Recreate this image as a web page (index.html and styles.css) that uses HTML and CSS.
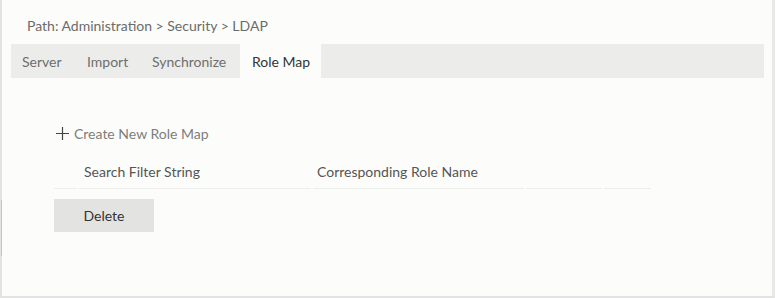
FILE: index.html
```html
<!DOCTYPE html>
<html>
<head>
<meta charset="utf-8">
<link rel="stylesheet" href="styles.css">
</head>
<body>
<div class="frame">
  <span class="edge-mark"></span>
  <div class="path">Path: Administration &gt; Security &gt; LDAP</div>
  <div class="tabs">
    <div class="tab t-server">Server</div>
    <div class="tab t-import">Import</div>
    <div class="tab t-sync">Synchronize</div>
    <div class="tab t-role active">Role Map</div>
  </div>
  <div class="content">
    <div class="create">
      <svg class="plus" width="13" height="13" viewBox="0 0 13 13"><path d="M6.5 0V13M0 6.5H13" stroke="#444" stroke-width="1.2" fill="none"/></svg>
      <span>Create New Role Map</span>
    </div>
    <div class="thead">
      <div class="cell c0"></div>
      <div class="cell c1">Search Filter String</div>
      <div class="cell c2">Corresponding Role Name</div>
      <div class="cell c3"></div>
      <div class="cell c4"></div>
    </div>
    <button class="btn">Delete</button>
  </div>
</div>
</body>
</html>
```
FILE: styles.css
```css
html, body {
  margin: 0;
  padding: 0;
  background: #fcfdfb;
}
body {
  font-family: Lato, "Open Sans", sans-serif;
  font-size: 14px;
}
.frame {
  position: relative;
  box-sizing: border-box;
  width: 775px;
  height: 298px;
  border-left: 2px solid #e3e3e2;
  border-right: 3px solid #e8e8e7;
  border-bottom: 2px solid #e3e3e3;
}
.edge-mark {
  position: absolute;
  left: -1px;
  top: 200px;
  width: 1px;
  height: 56px;
  background: #c4c4c4;
}
.path {
  color: #6b6b6b;
  padding: 16px 0 0 25px;
  height: 44px;
  box-sizing: border-box;
  line-height: 20px;
}
.tabs {
  display: flex;
  margin-left: 9px;
  width: 753px;
  height: 34px;
  background: #ecedea;
}
.tab {
  box-sizing: border-box;
  padding-left: 11px;
  line-height: 35px;
  color: #6e6e6e;
  white-space: nowrap;
}
.t-server { width: 65px; }
.t-import { width: 65px; }
.t-sync { width: 99px; }
.t-role { width: 81px; padding-left: 12px; }
.tab.active {
  background: #fcfdfb;
  color: #333;
}
.content {
  padding: 43px 0 0 52px;
}
.create {
  display: flex;
  align-items: center;
  height: 24px;
  color: #7d7d7d;
  gap: 5px;
  padding-left: 2px;
}
.thead {
  display: flex;
  gap: 2px;
  margin-top: 13px;
  height: 31px;
}
.cell {
  box-sizing: border-box;
  height: 31px;
  border-bottom: 1px solid #eceeec;
  line-height: 27px;
  color: #555;
  padding-left: 5px;
  white-space: nowrap;
}
.c0 { width: 23px; }
.c1 { width: 232px; }
.c2 { width: 211px; padding-left: 4px; }
.c3 { width: 76px; }
.c4 { width: 47px; }
.btn {
  display: block;
  margin-top: 10px;
  width: 100px;
  height: 33px;
  border: none;
  background: #e3e4e1;
  font-family: inherit;
  font-size: 14px;
  color: #333;
  padding: 0;
}
```
